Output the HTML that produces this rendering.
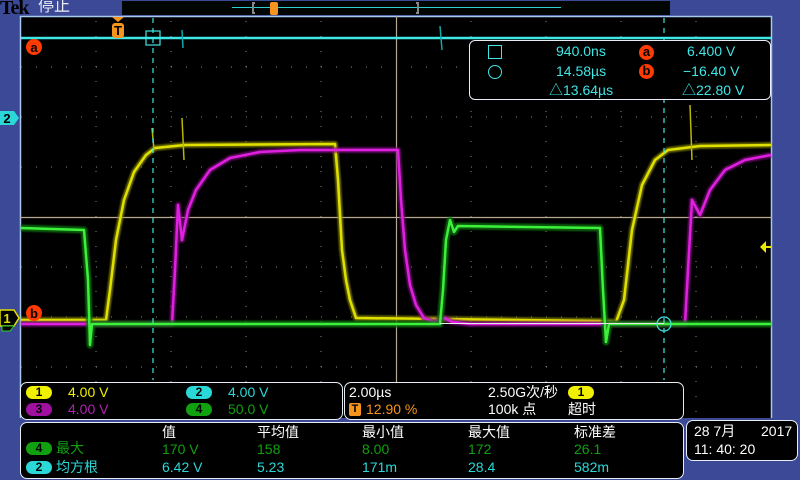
<!DOCTYPE html>
<html><head><meta charset="utf-8"><style>
body{margin:0;width:800px;height:480px;background:#3b4996;overflow:hidden;position:relative;font-family:"Liberation Sans","Noto Sans CJK SC",sans-serif}
.abs{position:absolute}
.panel{position:absolute;background:#000;border:1.5px solid #e8ecf4;border-radius:7px;box-sizing:border-box}
.t{position:absolute;font-size:14px;white-space:nowrap;line-height:16px}
.badge{position:absolute;width:26px;height:13px;border-radius:7px;font-size:12px;font-weight:bold;line-height:13px;text-align:center;color:#000}
</style></head><body>
<div class="t" style="left:0;top:-2px;font-family:'Liberation Serif',serif;font-weight:bold;font-size:20px;color:#000;letter-spacing:-1px;line-height:20px">Tek</div>
<div class="t" style="left:38px;top:-1px;font-size:16px;color:#e8ecf4">停止</div>
<div class="abs" style="left:122px;top:1px;width:548px;height:14px;background:#020602"></div>
<div class="abs" style="left:232px;top:7px;width:329px;height:1px;background:#2ad0d0"></div>
<div class="abs" style="left:252px;top:2px;width:3px;height:12px;border:2px solid #888;border-right:none;box-sizing:border-box"></div>
<div class="abs" style="left:416px;top:2px;width:3px;height:12px;border:2px solid #888;border-left:none;box-sizing:border-box"></div>
<div class="abs" style="left:270px;top:2px;width:8px;height:13px;background:#f7941d;border-radius:2px"></div>
<svg class="abs" style="left:0;top:0" width="800" height="480">
<defs><filter id="b"><feGaussianBlur stdDeviation="0.8"/></filter></defs>
<rect x="20" y="16" width="752" height="402" fill="#000"/>
<line x1="20.5" y1="16" x2="20.5" y2="418" stroke="#a8c8f0" stroke-width="1.5"/>
<line x1="771.5" y1="16" x2="771.5" y2="418" stroke="#a8c8f0" stroke-width="1.5"/>
<line x1="20" y1="16.5" x2="772" y2="16.5" stroke="#a8c8f0" stroke-width="1.5"/>
<g stroke="#8a8a70" stroke-width="1" stroke-dasharray="1 14">
<line x1="96" y1="21" x2="96" y2="418"/><line x1="171" y1="21" x2="171" y2="418"/><line x1="246" y1="21" x2="246" y2="418"/><line x1="321" y1="21" x2="321" y2="418"/><line x1="471" y1="21" x2="471" y2="418"/><line x1="546" y1="21" x2="546" y2="418"/><line x1="621" y1="21" x2="621" y2="418"/><line x1="696" y1="21" x2="696" y2="418"/>
<line x1="21" y1="67" x2="771" y2="67"/><line x1="21" y1="117" x2="771" y2="117"/><line x1="21" y1="167" x2="771" y2="167"/><line x1="21" y1="267" x2="771" y2="267"/><line x1="21" y1="317" x2="771" y2="317"/><line x1="21" y1="367" x2="771" y2="367"/>
</g>
<line x1="396.5" y1="16" x2="396.5" y2="418" stroke="#b8a890" stroke-width="1.2"/>
<line x1="20" y1="217.5" x2="772" y2="217.5" stroke="#b8a890" stroke-width="1.2"/>
<!-- cyan ch2 -->
<path d="M21 38 L771 38" stroke="#0a7a7a" stroke-width="9" opacity="0.6" filter="url(#b)"/>
<path d="M21 38 L771 38" stroke="#3ee6e6" stroke-width="2.5"/>
<path d="M182 30 L183 48 M440 26 L442 50" stroke="#1aa" stroke-width="1.5"/>
<g fill="none" stroke-linejoin="round">
<!-- yellow ch1 -->
<path d="M21 320 L106 320 L110 290 L116 240 L124 200 L134 172 L146 155 L155 148 L185 145 L335 144 L338 180 L342 250 L346 280 L350 300 L356 318 L600 321 L616 322 L624 300 L632 230 L642 185 L655 160 L668 150 L700 146 L771 145" stroke="#8a8a00" stroke-width="6" opacity="0.7" filter="url(#b)"/>
<path d="M21 320 L106 320 L110 290 L116 240 L124 200 L134 172 L146 155 L155 148 L185 145 L335 144 L338 180 L342 250 L346 280 L350 300 L356 318 L600 321 L616 322 L624 300 L632 230 L642 185 L655 160 L668 150 L700 146 L771 145" stroke="#e0e000" stroke-width="2.5"/>
<path d="M152 128 L154 150 M182 118 L184 160 M690 105 L692 160" stroke="#b8b800" stroke-width="1.5"/>
<!-- magenta ch3 -->
<path d="M21 324 L172 324 L175 270 L178 205 L182 240 L188 210 L196 190 L210 170 L230 158 L260 152 L300 150 L398 150 L401 200 L405 250 L410 285 L416 305 L424 318 L434 322 L445 318 L452 322 L470 324 L685 324 L688 270 L692 200 L700 215 L710 190 L725 170 L745 160 L771 155" stroke="#800a80" stroke-width="6" opacity="0.7" filter="url(#b)"/>
<path d="M21 324 L172 324 L175 270 L178 205 L182 240 L188 210 L196 190 L210 170 L230 158 L260 152 L300 150 L398 150 L401 200 L405 250 L410 285 L416 305 L424 318 L434 322 L445 318 L452 322 L470 324 L685 324 L688 270 L692 200 L700 215 L710 190 L725 170 L745 160 L771 155" stroke="#e020e0" stroke-width="2.5"/>
<!-- green ch4 -->
<path d="M21 228 L84 230 L88 280 L90 345 L92 324 L440 324 L443 290 L446 240 L450 220 L454 232 L458 226 L600 228 L603 290 L606 342 L609 324 L771 324" stroke="#0a700a" stroke-width="7" opacity="0.8" filter="url(#b)"/>
<path d="M21 228 L84 230 L88 280 L90 345 L92 324 L440 324 L443 290 L446 240 L450 220 L454 232 L458 226 L600 228 L603 290 L606 342 L609 324 L771 324" stroke="#3cf03c" stroke-width="2.5"/>
<line x1="440" y1="323.5" x2="664" y2="323.5" stroke="#e8e8e8" stroke-width="1"/>
</g>
<!-- cursors -->
<line x1="153" y1="18" x2="153" y2="380" stroke="#3ee6e6" stroke-width="1.2" stroke-dasharray="5 5"/>
<line x1="664" y1="18" x2="664" y2="380" stroke="#3ee6e6" stroke-width="1.2" stroke-dasharray="5 5"/>
<rect x="146" y="31" width="14" height="14" fill="none" stroke="#3ee6e6" stroke-width="1.2"/>
<circle cx="664" cy="324" r="7" fill="none" stroke="#3ee6e6" stroke-width="1.2"/>
<polygon points="112,17 124,17 118,22" fill="#f7941d"/>
<rect x="112" y="23" width="12" height="15" rx="3" fill="#f7941d"/>
<text x="118" y="35" font-size="13" font-weight="bold" text-anchor="middle" fill="#000" font-family="Liberation Sans">T</text>
<circle cx="34" cy="47" r="8" fill="#ff3b00"/><text x="34" y="52" font-size="13" font-weight="bold" text-anchor="middle" fill="#000" font-family="Liberation Sans">a</text>
<circle cx="34" cy="313" r="8" fill="#ff3b00"/><text x="34" y="318" font-size="13" font-weight="bold" text-anchor="middle" fill="#000" font-family="Liberation Sans">b</text>
<polygon points="0,111 14,111 19,118 14,125 0,125" fill="#2ad8d8"/><text x="7" y="123" font-size="13" font-weight="bold" text-anchor="middle" fill="#000" font-family="Liberation Sans">2</text>
<polygon points="0,310 14,310 19,318 14,326 0,326" fill="#000" stroke="#e0e000" stroke-width="1.5"/><text x="7" y="323" font-size="13" font-weight="bold" text-anchor="middle" fill="#e0e000" font-family="Liberation Sans">1</text>
<polygon points="2,326 14,326 10,331 2,331" fill="#000" stroke="#30d030" stroke-width="1"/>
<polygon points="760,247 766,241 766,253" fill="#e8e800"/><line x1="765" y1="247" x2="771" y2="247" stroke="#e8e800" stroke-width="2"/>
</svg>
<div class="panel" style="left:469px;top:40px;width:302px;height:60px;border-radius:6px"></div>
<div class="abs" style="left:488px;top:45px;width:12px;height:12px;border:1.2px solid #3ee6e6"></div>
<div class="abs" style="left:488px;top:65px;width:12px;height:12px;border:1.2px solid #3ee6e6;border-radius:50%"></div>
<div class="t" style="left:556px;top:43px;color:#3ee6e6">940.0ns</div>
<div class="t" style="left:556px;top:63px;color:#3ee6e6">14.58µs</div>
<div class="t" style="left:549px;top:82px;color:#3ee6e6">△13.64µs</div>
<div class="abs" style="left:639px;top:45px;width:15px;height:15px;border-radius:50%;background:#ff3b00;color:#000;font-weight:bold;font-size:13px;text-align:center;line-height:14px">a</div>
<div class="abs" style="left:639px;top:64px;width:15px;height:15px;border-radius:50%;background:#ff3b00;color:#000;font-weight:bold;font-size:13px;text-align:center;line-height:14px">b</div>
<div class="t" style="left:687px;top:43px;color:#3ee6e6">6.400 V</div>
<div class="t" style="left:683px;top:63px;color:#3ee6e6">−16.40 V</div>
<div class="t" style="left:682px;top:82px;color:#3ee6e6">△22.80 V</div>
<div class="panel" style="left:20px;top:382px;width:323px;height:38px"></div>
<div class="badge" style="left:26px;top:386px;background:#f0f000">1</div>
<div class="badge" style="left:26px;top:403px;background:#a010a0">3</div>
<div class="badge" style="left:186px;top:386px;background:#2ad8d8">2</div>
<div class="badge" style="left:186px;top:403px;background:#10a010">4</div>
<div class="t" style="left:68px;top:384px;color:#f0f000">4.00 V</div>
<div class="t" style="left:68px;top:401px;color:#b020b0">4.00 V</div>
<div class="t" style="left:228px;top:384px;color:#2ad8d8">4.00 V</div>
<div class="t" style="left:228px;top:401px;color:#10a010">50.0 V</div>
<div class="panel" style="left:344px;top:382px;width:340px;height:38px"></div>
<div class="t" style="left:349px;top:384px;color:#fff">2.00µs</div>
<div class="abs" style="left:349px;top:403px;width:12px;height:13px;background:#f7941d;border-radius:2px;font-size:11px;font-weight:bold;text-align:center;line-height:13px">T</div>
<div class="t" style="left:366px;top:401px;color:#f7941d">12.90 %</div>
<div class="t" style="left:488px;top:384px;color:#fff">2.50G次/秒</div>
<div class="badge" style="left:568px;top:386px;background:#f0f000">1</div>
<div class="t" style="left:488px;top:401px;color:#fff">100k 点</div>
<div class="t" style="left:568px;top:401px;color:#fff">超时</div>
<div class="panel" style="left:20px;top:422px;width:664px;height:57px"></div>
<div class="t" style="left:162px;top:424px;color:#fff">值</div>
<div class="t" style="left:257px;top:424px;color:#fff">平均值</div>
<div class="t" style="left:362px;top:424px;color:#fff">最小值</div>
<div class="t" style="left:468px;top:424px;color:#fff">最大值</div>
<div class="t" style="left:574px;top:424px;color:#fff">标准差</div>
<div class="badge" style="left:26px;top:442px;background:#10a010">4</div>
<div class="badge" style="left:26px;top:461px;background:#2ad8d8">2</div>
<div class="t" style="left:56px;top:440px;color:#10a010">最大</div>
<div class="t" style="left:56px;top:459px;color:#2ad8d8">均方根</div>
<div class="t" style="left:162px;top:441px;color:#10a010">170 V</div>
<div class="t" style="left:257px;top:441px;color:#10a010">158</div>
<div class="t" style="left:362px;top:441px;color:#10a010">8.00</div>
<div class="t" style="left:468px;top:441px;color:#10a010">172</div>
<div class="t" style="left:574px;top:441px;color:#10a010">26.1</div>
<div class="t" style="left:162px;top:459px;color:#2ad8d8">6.42 V</div>
<div class="t" style="left:257px;top:459px;color:#2ad8d8">5.23</div>
<div class="t" style="left:362px;top:459px;color:#2ad8d8">171m</div>
<div class="t" style="left:468px;top:459px;color:#2ad8d8">28.4</div>
<div class="t" style="left:574px;top:459px;color:#2ad8d8">582m</div>
<div class="panel" style="left:686px;top:420px;width:112px;height:41px"></div>
<div class="t" style="left:694px;top:423px;color:#fff">28 7月</div>
<div class="t" style="left:761px;top:423px;color:#fff">2017</div>
<div class="t" style="left:694px;top:441px;color:#fff">11: 40: 20</div>
</body></html>
